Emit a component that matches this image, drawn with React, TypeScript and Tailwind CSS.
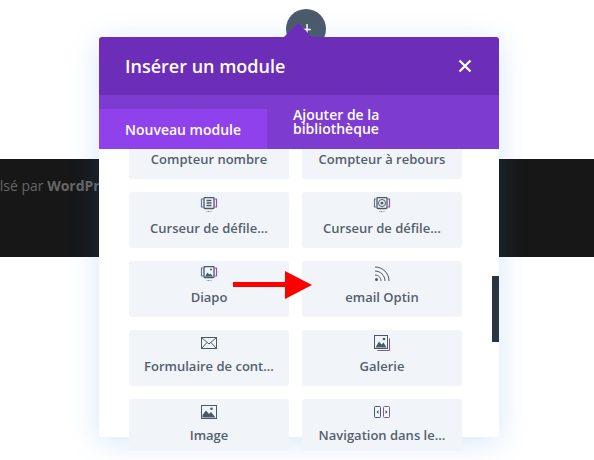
import React from 'react';

const ink = '#4c5866';

const SliderFrame = ({ children }: { children: React.ReactNode }) => (
  <svg width="18" height="16" viewBox="0 0 18 16" fill="none" stroke={ink}>
    <rect x="4" y="0.5" width="10" height="11" rx="1" strokeWidth="1.300" />
    <path d="M3.500 2H1.500v8h2" stroke="#66759a" strokeWidth="1.200" />
    <path d="M14.500 2h2v8h-2" stroke="#8c5aa0" strokeWidth="1.200" />
    <path d="M6.500 14.500h5" stroke="#8a93a0" strokeDasharray="1 0.500" />
    {children}
  </svg>
);

const icons: Record<string, React.ReactNode> = {
  list: (
    <SliderFrame>
      <path d="M6.500 3.500h5M6.500 6h5M6.500 8.500h5" strokeWidth="1.300" />
    </SliderFrame>
  ),
  target: (
    <SliderFrame>
      <circle cx="9" cy="6" r="3.500" />
      <circle cx="9" cy="6" r="1.500" fill={ink} stroke="none" />
    </SliderFrame>
  ),
  photo: (
    <SliderFrame>
      <path d="M5 10.500l2.500-4 1.800 2 1.200-1 2.500 3z" fill={ink} stroke="none" />
      <circle cx="11" cy="3.500" r="1" fill={ink} stroke="none" />
    </SliderFrame>
  ),
  rss: (
    <svg width="16" height="16" viewBox="0 0 16 16" fill="none" stroke={ink}>
      <path d="M1 1c7.500 0 14 6 14 14M1 5c5.500 0 10 4.500 10 10M1 9c3.300 0 6 2.700 6 6" />
      <circle cx="2.500" cy="13.500" r="1.500" fill={ink} stroke="none" />
    </svg>
  ),
  mail: (
    <svg width="16" height="13" viewBox="0 0 16 13" fill="none" stroke={ink}>
      <rect x="0.500" y="0.500" width="15" height="11" />
      <path d="M0.500 0.500L8 7l7.500-6.500M0.500 11.500L6 5.500M15.500 11.500L10 5.500" />
    </svg>
  ),
  gallery: (
    <svg width="17" height="17" viewBox="0 0 17 17" fill="none">
      <path d="M15.500 3.500v12h-12" stroke="#7c5a96" />
      <rect x="0.500" y="0.500" width="13" height="13" stroke={ink} />
      <path d="M1.500 12.500l3.500-6 2.500 3 2-2 3 5z" fill={ink} />
      <circle cx="10" cy="4" r="1.300" fill={ink} />
    </svg>
  ),
  image: (
    <svg width="16" height="14" viewBox="0 0 16 14" fill="none">
      <rect x="0.500" y="0.500" width="15" height="13" stroke={ink} />
      <path d="M1.500 12.500V10l3.500-4.500 3 3.500 2-2 4.500 5.500z" fill={ink} />
      <circle cx="10.500" cy="3.800" r="1.300" fill={ink} />
    </svg>
  ),
  nav: (
    <svg width="16" height="12" viewBox="0 0 16 12" fill="none" stroke={ink}>
      <rect x="0.500" y="0.500" width="6" height="11" rx="1" />
      <rect x="9.500" y="0.500" width="6" height="11" rx="1" stroke="#7c5a96" />
      <path d="M4.500 4v4L2.500 6zM11.500 4v4l2-2z" fill={ink} stroke="none" />
    </svg>
  ),
};

const modules = [
  { label: 'Compteur nombre', icon: 'list' },
  { label: 'Compteur à rebours', icon: 'list' },
  { label: 'Curseur de défile...', icon: 'list' },
  { label: 'Curseur de défile...', icon: 'target' },
  { label: 'Diapo', icon: 'photo' },
  { label: 'email Optin', icon: 'rss' },
  { label: 'Formulaire de cont...', icon: 'mail' },
  { label: 'Galerie', icon: 'gallery' },
  { label: 'Image', icon: 'image' },
  { label: 'Navigation dans le...', icon: 'nav' },
];

export default function App() {
  return (
    <div className="relative h-[460px] w-[594px] overflow-hidden bg-white font-['Open_Sans',sans-serif]">
      {/* Page footer behind the modal */}
      <div className="mt-[159px] h-[98px] overflow-hidden bg-[#171717] pt-[16px]">
        <p className="-ml-[40px] whitespace-nowrap text-[14px] text-[#666666]">
          Propulsé par <span className="font-bold">WordPress</span>
        </p>
      </div>

      {/* Add button */}
      <div className="absolute top-[9px] left-[286px] flex h-10 w-10 items-center justify-center rounded-full bg-[#4c5a6a]">
        <svg width="16" height="16" viewBox="0 0 16 16" stroke="#fff" strokeWidth="1.500">
          <path d="M9 3v10M4 8.500h9" />
        </svg>
      </div>

      {/* Modal */}
      <div className="absolute top-[37px] left-[99px] h-[400px] w-[400px] rounded-[3px] bg-white shadow-[0_5px_30px_rgba(43,135,218,0.2)]">
        <div className="absolute -top-[14px] left-[185px] h-0 w-0 border-x-[14px] border-b-[14px] border-x-transparent border-b-[#6c2eb9]" />
        <div className="flex h-[58px] items-center justify-between rounded-t-[3px] bg-[#6c2eb9] pr-[27px] pl-[26px]">
          <h1 className="text-[18px] font-semibold text-white">Insérer un module</h1>
          <svg width="14" height="14" viewBox="0 0 14 14" stroke="#fff" strokeWidth="2.200">
            <path d="M1.500 1.500l11 11M12.500 1.500l-11 11" />
          </svg>
        </div>
        <div className="flex h-[54px] items-end bg-[#7e3bd0]">
          <div className="flex h-10 w-[168px] items-center bg-[#8f42ec] pl-[26px] text-[14px] font-semibold text-white">
            Nouveau module
          </div>
          <div className="flex h-10 items-center pl-[26px] text-[14px] leading-[14px] font-semibold text-white">
            <span className="-mt-[14px] w-[110px]">Ajouter de la bibliothèque</span>
          </div>
        </div>

        <div className="h-[302px] overflow-hidden">
          <div className="-mt-[26px] grid grid-cols-[160px_160px] gap-[13px] pl-[30px]">
            {modules.map((m, i) => (
              <div key={i} className="flex h-[56px] flex-col items-center rounded-[3px] bg-[#f1f5f9]">
                <div className="flex h-[24px] items-center pt-[2px]">{icons[m.icon]}</div>
                <span className="mt-[2px] text-[13px] leading-[20px] font-semibold text-[#55606e]">{m.label}</span>
              </div>
            ))}
          </div>
        </div>

        {/* Scrollbar */}
        <div className="absolute top-[239px] right-0 h-[66px] w-[7px] bg-[#2c3440]" />
      </div>

      {/* Annotation arrow */}
      <svg className="absolute top-[270px] left-[232px]" width="82" height="30" viewBox="0 0 82 30" fill="#ff0000">
        <path d="M1 12h52V1l27 14-27 14V17H1z" />
      </svg>
    </div>
  );
}
